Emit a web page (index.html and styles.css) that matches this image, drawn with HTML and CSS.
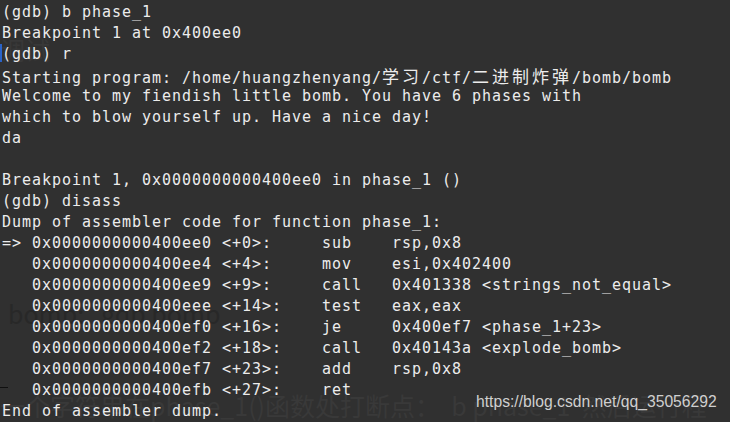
FILE: index.html
```html
<!DOCTYPE html>
<html lang="zh-CN">
<head>
<meta charset="utf-8">
<title>gdb bomb phase_1</title>
<link rel="stylesheet" href="styles.css">
</head>
<body>
<div class="screen">
  <div class="ghost" aria-hidden="true">
    <span class="ghost-top">调试</span>
    <span class="ghost-mid">bomb:&nbsp;&nbsp; gdb bomb</span>
    <span class="ghost-bottom">一个字符串在phase_1()函数处打断点：&nbsp; b phase_1&nbsp; 然后运行程</span>
  </div>
  <div class="edge-mark"></div>
  <div class="edge-line"></div>
  <pre class="term"><div class="ln">(gdb) b phase_1</div><div class="ln">Breakpoint 1 at 0x400ee0</div><div class="ln">(gdb) r</div><div class="ln">Starting program: /home/huangzhenyang/<span class="cjk">学习</span>/ctf/<span class="cjk">二进制炸弹</span>/bomb/bomb</div><div class="ln">Welcome to my fiendish little bomb. You have 6 phases with</div><div class="ln">which to blow yourself up. Have a nice day!</div><div class="ln">da</div><div class="ln"> </div><div class="ln">Breakpoint 1, 0x0000000000400ee0 in phase_1 ()</div><div class="ln">(gdb) disass</div><div class="ln">Dump of assembler code for function phase_1:</div><div class="ln">=&gt; 0x0000000000400ee0 &lt;+0&gt;:     sub    rsp,0x8</div><div class="ln">   0x0000000000400ee4 &lt;+4&gt;:     mov    esi,0x402400</div><div class="ln">   0x0000000000400ee9 &lt;+9&gt;:     call   0x401338 &lt;strings_not_equal&gt;</div><div class="ln">   0x0000000000400eee &lt;+14&gt;:    test   eax,eax</div><div class="ln">   0x0000000000400ef0 &lt;+16&gt;:    je     0x400ef7 &lt;phase_1+23&gt;</div><div class="ln">   0x0000000000400ef2 &lt;+18&gt;:    call   0x40143a &lt;explode_bomb&gt;</div><div class="ln">   0x0000000000400ef7 &lt;+23&gt;:    add    rsp,0x8</div><div class="ln">   0x0000000000400efb &lt;+27&gt;:    ret    </div><div class="ln">End of assembler dump.</div></pre>
  <div class="watermark">https://blog.csdn.net/qq_35056292</div>
</div>
</body>
</html>
```
FILE: styles.css
```css
html, body {
  margin: 0;
  padding: 0;
  background: #303030;
  width: 730px;
  height: 422px;
  overflow: hidden;
}

.screen {
  position: relative;
  width: 730px;
  height: 422px;
  background: #303030;
  overflow: hidden;
}

.term {
  position: relative;
  z-index: 2;
  margin: 0;
  padding: 2px 0 0 2px;
  font-family: "DejaVu Sans Mono", "Liberation Mono", monospace;
  font-size: 15px;
  letter-spacing: 0.97px;
  color: #ececec;
  white-space: pre;
}

.ln {
  height: 21px;
  line-height: 21px;
}

.cjk {
  font-family: "Noto Sans CJK SC", sans-serif;
  font-size: 17px;
  letter-spacing: 3px;
  line-height: 21px;
}

.ghost {
  position: absolute;
  inset: 0;
  z-index: 1;
  font-family: "Noto Sans CJK SC", "Noto Sans", sans-serif;
  font-size: 25px;
  line-height: 1;
  white-space: pre;
}

.ghost-top {
  position: absolute;
  left: 0;
  top: 37px;
  color: #383838;
}

.ghost-mid {
  position: absolute;
  left: 8px;
  top: 301px;
  color: #282828;
}

.ghost-bottom {
  position: absolute;
  left: 0;
  top: 393px;
  color: #393939;
}

.edge-mark {
  position: absolute;
  left: 0;
  top: 44px;
  width: 2px;
  height: 18px;
  background: #2a63c8;
  z-index: 3;
}

.edge-line {
  position: absolute;
  left: 0;
  top: 387px;
  width: 8px;
  height: 1px;
  background: #101010;
  z-index: 3;
}

.watermark {
  position: absolute;
  z-index: 3;
  left: 476px;
  top: 394px;
  font-family: "Liberation Sans", Arial, sans-serif;
  font-size: 15.7px;
  line-height: 16px;
  color: #cfcfcf;
  white-space: nowrap;
}
```
